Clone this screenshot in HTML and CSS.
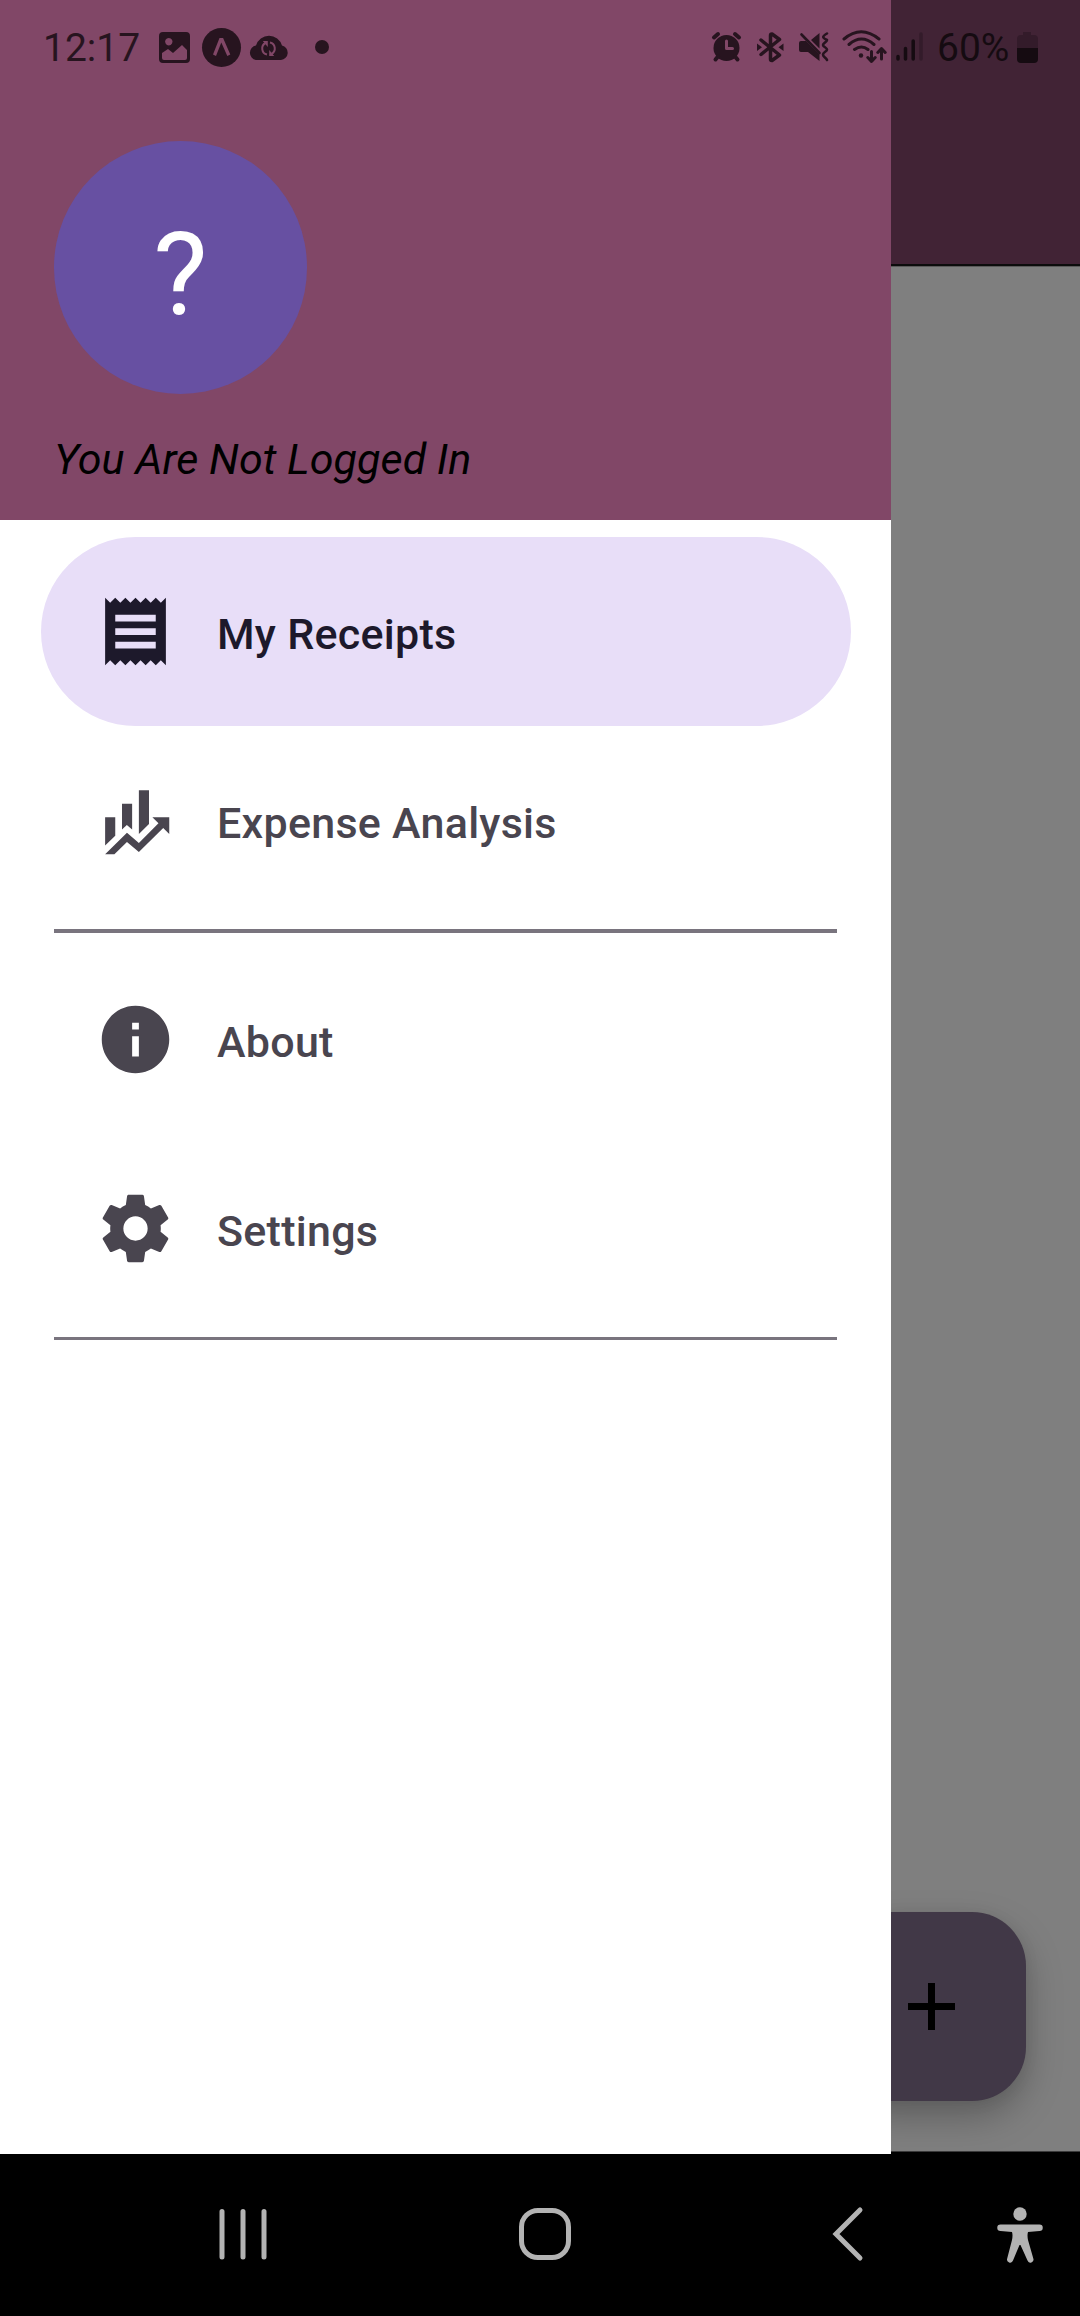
FILE: index.html
```html
<!DOCTYPE html>
<html lang="en">
<head>
<meta charset="utf-8">
<title>My Receipts</title>
<link rel="stylesheet" href="styles.css">
</head>
<body>
<div class="screen">
  <div class="page">
    <header class="app-bar"></header>
    <main class="content">
      <button class="fab" aria-label="Add receipt">
        <svg class="fab-icon" viewBox="0 0 47 47"><path d="M20 0h7v20h20v7H27v20h-7V27H0v-7h20z"/></svg>
      </button>
    </main>
  </div>

  <aside class="drawer">
    <header class="account">
      <div class="avatar">?</div>
      <p class="account-name">You Are Not Logged In</p>
    </header>
    <nav class="menu">
      <a class="item active">
        <svg class="item-icon" viewBox="0 0 24 24"><path d="M18 17H6v-2h12v2zm0-4H6v-2h12v2zm0-4H6V7h12v2zM3 22l1.500-1.500L6 22l1.500-1.500L9 22l1.500-1.500L12 22l1.500-1.500L15 22l1.500-1.500L18 22l1.500-1.500L21 22V2l-1.500 1.500L18 2l-1.500 1.500L15 2l-1.500 1.500L12 2l-1.500 1.500L9 2 7.500 3.500 6 2 4.500 3.500 3 2v20z"/></svg>
        <span>My Receipts</span>
      </a>
      <a class="item">
        <svg class="item-icon" viewBox="0 0 24 24"><path d="M6 16.500l-3 2.940V11h3v5.500zm5-1.840l-1.570-1.340L8 14.640V7h3v7.660zM16 13l-3 3V3h3v10zM18.810 12.810L17 11h5v5l-1.790-1.790L13 21.360l-3.530-3.020L5.750 22H3l6.470-6.340L13 18.640l5.810-5.830z"/></svg>
        <span>Expense Analysis</span>
      </a>
      <hr class="divider">
      <a class="item">
        <svg class="item-icon" viewBox="0 0 24 24"><path d="M12 2C6.480 2 2 6.480 2 12s4.480 10 10 10 10-4.480 10-10S17.520 2 12 2zm1 15h-2v-6h2v6zm0-8h-2V7h2v2z"/></svg>
        <span>About</span>
      </a>
      <a class="item">
        <svg class="item-icon" viewBox="0 0 24 24"><path d="M19.500 12c0-.34-.03-.66-.07-1l2.110-1.630c.19-.15.24-.42.12-.64l-2-3.460c-.12-.22-.39-.31-.61-.22l-2.490 1c-.52-.39-1.060-.73-1.690-.98l-.37-2.650A.506.506 0 0 0 14 2h-4c-.25 0-.46.18-.5.420l-.37 2.650c-.63.25-1.170.59-1.690.98l-2.490-1c-.22-.09-.49 0-.61.22l-2 3.460c-.13.22-.07.49.12.64L4.570 11c-.04.34-.07.67-.07 1s.03.650.070.970l-2.110 1.660c-.19.15-.25.420-.12.640l2 3.460c.12.220.39.300.61.220l2.490-1.010c.52.400 1.060.740 1.690.990l.37 2.650c.04.240.25.420.5.420h4c.25 0 .46-.18.5-.42l.37-2.650c.63-.26 1.170-.59 1.690-.99l2.490 1.010c.22.080.49 0 .61-.22l2-3.460c.12-.22.07-.49-.12-.64l-2.110-1.660c.04-.32.07-.64.07-.97zM12 15.600a3.600 3.600 0 1 1 0-7.200 3.600 3.600 0 0 1 0 7.200z"/></svg>
        <span>Settings</span>
      </a>
      <hr class="divider thin">
    </nav>
  </aside>

  <div class="status-bar">
    <span class="clock">12:17</span>
    <svg class="notifications" viewBox="155 24 180 48">
      <path fill-rule="evenodd" d="M163 32h23q4 0 4 4v23q0 4-4 4h-23q-4 0-4-4V36q0-4 4-4zM168.800 38a3.700 3.700 0 1 0 .01 0zM162 53v5q0 2 2 2h21q2 0 2-2v-8l-5-5-9 8-5-4z"/>
      <circle cx="221.500" cy="47.500" r="19.500"/>
      <path class="knockout" d="M213 54.500l6.500-16.500h3.600l7.200 16.500-3 1.500-6-13.500-5.300 13.500z"/>
      <path d="M256 60h25a7.300 7.300 0 0 0 1-14.400 13.500 13.500 0 0 0-26 0 7.300 7.300 0 0 0 0 14.400z"/>
      <path class="cloud-arrows" d="M265.500 43a6.200 6.200 0 0 0 1.500 11.500M271.500 54a6.200 6.200 0 0 0-1.500-11.500"/>
      <path class="knockout" d="M262.800 41h5v6zM274.200 56h-5v-6z"/>
      <circle cx="322" cy="47" r="7"/>
    </svg>
    <svg class="system" viewBox="708 24 180 48">
      <circle cx="726.500" cy="48" r="13"/>
      <path class="stroke w4" d="M714 37.500l4-3.500M739 37.500l-4-3.500M718 56.500l-2.500 3M735 56.500l2.500 3"/>
      <path class="knockout-line" d="M726.500 41v7.500h6"/>
      <path class="stroke w35" d="M761 40l18.500 15-7.500 5.500q-1.500 0-1.500-1.500V35.500q0-1.500 1.500-1.500l7.500 5.500L761 54.500"/>
      <path d="M757 43.500l5 3.800-5 3.800zM783.500 43.500v7.600l-5-3.800z"/>
      <path d="M819.500 33v15.500L811 40zM801 41h5l13.500 13.500V61L808 52h-7q-2 0-2-2v-7q0-2 2-2z"/>
      <path class="stroke w2" d="M801.500 34.500l18 18.500"/>
      <path class="stroke w2" d="M827 33.500c-5 3-5 4 0 6.500 0 2-4 3-4 5s4 2.500 4 4.500-4 2.500-4 5 3 3 4 5.500"/>
      <path class="stroke w3" d="M844 39q17-14.500 35 0M849 44.500q12.500-11 25 0M854.500 49.500q7-5 13.500 0M871.500 51.500v9.500M867.800 57.500l3.700 4 3.700-4M881.500 59v-10M877.800 52.500l3.700-4 3.700 4"/>
      <circle cx="861" cy="55.500" r="2.200"/>
    </svg>
    <svg class="signal" viewBox="894 24 32 48">
      <path class="stroke w35" d="M898 56.500v2.500M905.500 48.500V59M913.200 41v18"/>
      <path class="stroke w35 faint" d="M921 34v25"/>
    </svg>
    <span class="battery-level">60%</span>
    <svg class="battery" viewBox="1016 28 24 40">
      <path class="faint-fill" d="M1023 32h8v3h3q4 0 4 4v9h-21v-9q0-4 4-4h2z"/>
      <path d="M1017 48h21v11q0 4-4 4h-13q-4 0-4-4z"/>
    </svg>
  </div>

  <footer class="nav-bar">
    <svg class="nav-icon" viewBox="0 0 52 56"><path class="key" d="M5 5.500v45.500M26 5.500v45.500M47 5.500v45.500"/></svg>
    <svg class="nav-icon" viewBox="0 0 56 56"><rect class="key" x="4.500" y="4.500" width="47" height="47" rx="16.500"/></svg>
    <svg class="nav-icon" viewBox="0 0 36 56"><path class="key" d="M30 4L6 28l24 24"/></svg>
    <svg class="person" viewBox="0 0 46 56"><circle cx="23" cy="7" r="6.700"/><path d="M3.500 17.500h39a3.200 3.200 0 0 1 0 6.500L31 25q-1 3 0 8l5.300 18.500a3 3 0 0 1-5.800 2L23.500 38h-1L16 53.500a3 3 0 0 1-5.800-2L15 33q1-5 0-8L3.500 24a3.200 3.200 0 0 1 0-6.500z"/></svg>
  </footer>
</div>
</body>
</html>
```
FILE: styles.css
```css
* { box-sizing: border-box; }

body {
  margin: 0;
  font-family: Roboto, sans-serif;
}

.screen {
  position: relative;
  display: flex;
  flex-direction: column;
  width: 1080px;
  height: 2316px;
  overflow: hidden;
  background: #000;
}

/* Dimmed page behind the open drawer */
.page {
  display: flex;
  flex-direction: column;
  height: 2152px;
}

.app-bar {
  height: 266px;
  background: #412335;
  border-bottom: 2px solid #0c0c0c;
}

.content {
  flex: 1;
  display: flex;
  justify-content: flex-end;
  align-items: flex-end;
  padding: 0 54px 50px 0;
  background: #7f7f7f;
  border-top: 1px solid #5a5a5a;
  border-bottom: 1px solid #3c3c3c;
}

.fab {
  display: flex;
  align-items: center;
  justify-content: center;
  width: 189px;
  height: 189px;
  padding: 0;
  border: 0;
  border-radius: 54px;
  background: #413847;
  box-shadow: 0 16px 36px rgba(0, 0, 0, .26), 0 2px 16px rgba(0, 0, 0, .06);
}

.fab-icon { width: 47px; height: 47px; }

.drawer {
  position: absolute;
  top: 0;
  left: 0;
  width: 891px;
  height: 2154px;
  background: #fff;
}

.account {
  height: 520px;
  padding: 141px 54px 0;
  background: #814767;
}

.avatar {
  width: 253px;
  height: 253px;
  border-radius: 50%;
  background: #6750a2;
  color: #fff;
  font-size: 115px;
  line-height: 268px;
  text-align: center;
}

.account-name {
  margin: 40px 0 0;
  color: #000;
  font-size: 43px;
  font-style: italic;
  letter-spacing: .06px;
  line-height: 50px;
  white-space: nowrap;
}

.menu { padding: 17px 40px 0 41px; }

.item {
  display: flex;
  align-items: center;
  gap: 41px;
  height: 189px;
  padding-left: 54px;
  border-radius: 95px;
  color: #49454f;
  font-size: 43px;
  font-weight: 500;
  letter-spacing: .27px;
  line-height: 50px;
}

.item span { padding-top: 4px; }

.item.active {
  background: #e8def8;
  color: #1d192b;
}

.item-icon {
  width: 81px;
  height: 81px;
  fill: currentColor;
}

.divider {
  height: 4px;
  margin: 14px 14px 12px 13px;
  border: 0;
  background: #79747e;
}

.divider.thin { height: 3px; }

.status-bar {
  position: absolute;
  top: 24px;
  left: 0;
  display: flex;
  width: 1080px;
  height: 48px;
  padding-left: 43px;
  color: #27141f;
  fill: currentColor;
  font-size: 39px;
  line-height: 48px;
}

.clock { width: 112px; }
.notifications { width: 180px; height: 48px; }
.system { width: 180px; height: 48px; margin-left: 373px; }
.signal { width: 32px; height: 48px; margin-left: 6px; color: #150b11; fill: currentColor; }
.battery-level { width: 79px; margin-left: 11px; color: #150b11; }
.battery { width: 24px; height: 40px; margin-top: 4px; color: #150b11; fill: currentColor; }

.knockout { fill: #814767; }
.knockout-line { fill: none; stroke: #814767; stroke-width: 3; stroke-linecap: round; stroke-linejoin: round; }
.cloud-arrows { fill: none; stroke: #814767; stroke-width: 2; }
.stroke { fill: none; stroke: currentColor; stroke-linecap: round; stroke-linejoin: round; }
.w2 { stroke-width: 2.6; }
.w3 { stroke-width: 3; }
.w35 { stroke-width: 3.5; }
.w4 { stroke-width: 4; }
.faint { stroke: #331b2a; }
.faint-fill { fill: #331b2a; }

.nav-bar {
  display: flex;
  align-items: flex-start;
  height: 164px;
  padding: 54px 0 0 217px;
}

.nav-icon { height: 56px; fill: none; }
.nav-icon:nth-child(1) { width: 52px; }
.nav-icon:nth-child(2) { width: 56px; margin-left: 248px; }
.nav-icon:nth-child(3) { width: 36px; margin-left: 257px; }
.person { width: 46px; height: 56px; margin: 1px 0 0 131px; fill: #b3b3b3; }
.key { stroke: #b3b3b3; stroke-width: 5; stroke-linecap: round; stroke-linejoin: miter; }
```
